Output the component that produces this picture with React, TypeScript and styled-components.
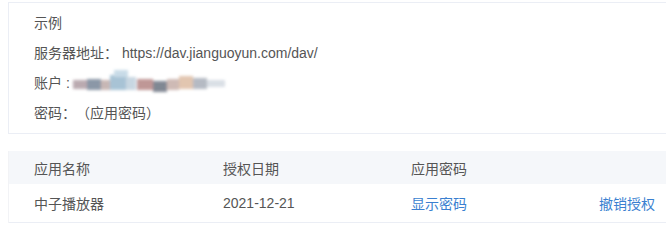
import styled, { createGlobalStyle } from 'styled-components';

const GlobalStyle = createGlobalStyle`
	body {
		margin: 0;
		background: #fff;
		font-family: 'Liberation Sans', 'Noto Sans CJK SC', sans-serif;
		font-size: 14px;
		color: #555;
		overflow: hidden;
		text-spacing-trim: space-all;
	}
`;

const apps = [
	{ name: '中子播放器', date: '2021-12-21' },
];

// blurred-out account name
function Smudge() {
	return (
		<svg width="160" height="30" viewBox="0 0 160 30" style={{ marginLeft: 0 }}>
			<defs>
				<filter id="b" x="-10%" y="-50%" width="120%" height="200%">
					<feGaussianBlur stdDeviation="1.5" />
				</filter>
			</defs>
			<g filter="url(#b)" opacity="0.9">
				<rect x="3" y="13" width="14" height="9" fill="#b4a1a8" />
				<rect x="17" y="12" width="14" height="11" fill="#7f8c9e" />
				<rect x="31" y="13" width="10" height="10" fill="#c2b0ad" />
				<rect x="40" y="8" width="16" height="15" fill="#9fbdd1" />
				<rect x="44" y="3" width="14" height="7" fill="#c3d8e5" />
				<rect x="56" y="10" width="10" height="13" fill="#c3d3df" />
				<rect x="67" y="12" width="16" height="11" fill="#b98c8b" />
				<rect x="83" y="14" width="14" height="11" fill="#737c88" />
				<rect x="97" y="12" width="12" height="11" fill="#c9b3ad" />
				<rect x="109" y="9" width="14" height="13" fill="#dfc0a8" />
				<rect x="123" y="11" width="14" height="11" fill="#adb3bd" />
				<rect x="137" y="13" width="18" height="7" fill="#d6dce3" />
			</g>
		</svg>
	);
}

export default function App() {
	return (
		<>
			<GlobalStyle />
			<Page>
				<Card>
					<Line>示例</Line>
					<Line>服务器地址：&nbsp;https://dav.jianguoyun.com/dav/</Line>
					<Line>账户 :<Smudge /></Line>
					<Line>密码：（应用密码）</Line>
				</Card>
				<Table>
					<HeadRow>
						<Cell>应用名称</Cell>
						<Cell>授权日期</Cell>
						<Cell>应用密码</Cell>
						<Cell />
					</HeadRow>
					{apps.map(x => (
						<BodyRow key={x.name}>
							<Cell>{x.name}</Cell>
							<Cell>{x.date}</Cell>
							<Cell><Link>显示密码</Link></Cell>
							<Cell><Link>撤销授权</Link></Cell>
						</BodyRow>
					))}
				</Table>
			</Page>
		</>
	);
}

const Page = styled.div`
	padding: 2px 0 0 8px;
	width: 666px;
`;

const Card = styled.div`
	border: 1px solid #ebeef5;
	border-right: none;
	padding: 4px 0 6px 25px;
	height: 120px;
	display: flex;
	flex-direction: column;
`;

const Line = styled.div`
	height: 30px;
	display: flex;
	align-items: center;
	white-space: nowrap;
`;

const Table = styled.div`
	margin-top: 17px;
	border-left: 1px solid #f2f3f6;
`;

const Row = styled.div`
	display: grid;
	grid-template-columns: 189px 188px 188px 1fr;
	align-items: center;
`;

const HeadRow = styled(Row)`
	height: 33px;
	background: #f5f7fa;
`;

const BodyRow = styled(Row)`
	height: 38px;
	border-bottom: 1px solid #ebeef5;
`;

const Cell = styled.div`
	padding-left: 25px;
	white-space: nowrap;
`;

const Link = styled.span`
	color: #3a7fd0;
	cursor: pointer;
`;
